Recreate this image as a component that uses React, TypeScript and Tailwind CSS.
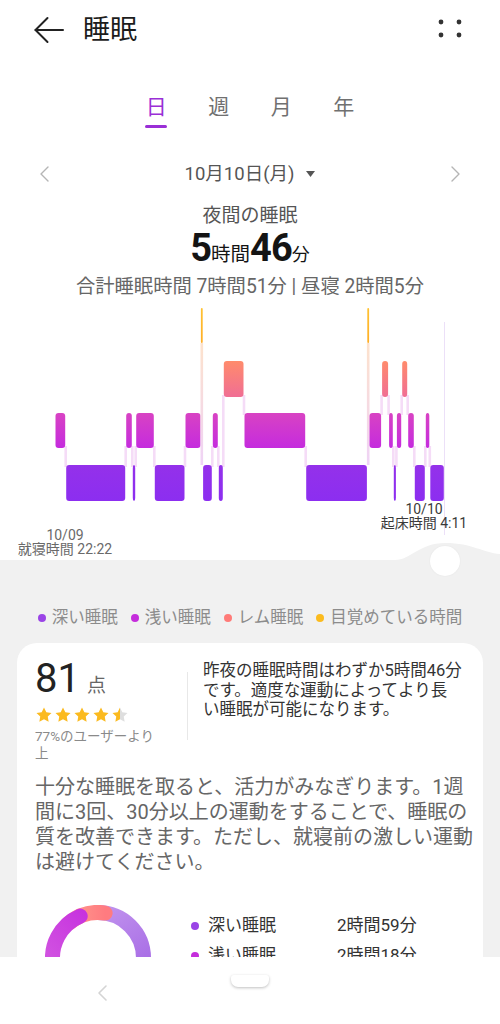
/* ── Sleep – daily view, stage chart, score card ────────── */

type Stage = 'awake' | 'rem' | 'light' | 'deep';

// y ranges of every stage row inside the chart box
const LEVEL: Record<Stage, [number, number]> = {
  awake: [8, 43],
  rem: [61, 97],
  light: [113, 148],
  deep: [165, 201],
};

const SEGS: [Stage, number, number][] = [
  ['light', 55, 65.7],
  ['deep', 65.7, 125.7],
  ['light', 125.7, 132.3],
  ['deep', 132.3, 135.7],
  ['light', 135.7, 154.3],
  ['deep', 154.3, 185],
  ['light', 185, 201],
  ['awake', 201, 202.6],
  ['deep', 202.6, 212.3],
  ['light', 212.3, 218.3],
  ['deep', 218.3, 223.3],
  ['rem', 223.3, 244],
  ['light', 244, 305.7],
  ['deep', 305.7, 367.4],
  ['awake', 367.4, 369],
  ['light', 369, 381.6],
  ['rem', 381.6, 388.6],
  ['light', 388.6, 393.3],
  ['deep', 393.3, 396.4],
  ['light', 396.4, 401.7],
  ['rem', 401.7, 407.7],
  ['light', 407.7, 414.3],
  ['deep', 414.3, 425.3],
  ['light', 425.3, 429.8],
  ['deep', 429.8, 444.3],
];

function SleepChart() {
  const links: { x: number; y0: number; y1: number }[] = [];
  for (let i = 1; i < SEGS.length; i++) {
    const a = SEGS[i - 1][0];
    const b = SEGS[i][0];
    if (a === 'awake' || b === 'awake') continue;
    const upper = LEVEL[a][0] < LEVEL[b][0] ? a : b;
    const lower = upper === a ? b : a;
    links.push({ x: SEGS[i][1], y0: LEVEL[upper][1] - 2, y1: LEVEL[lower][0] + 2 });
  }

  return (
    <div className="relative h-[260px]">
      <svg width="500" height="260" viewBox="0 0 500 260" className="block">
        <defs>
          <linearGradient id="stageGrad" gradientUnits="userSpaceOnUse" x1="0" y1="8" x2="0" y2="201">
            <stop offset="0" stopColor="#ffc233" />
            <stop offset="0.181" stopColor="#ffae25" />
            <stop offset="0.275" stopColor="#ff8b6c" />
            <stop offset="0.461" stopColor="#f06e94" />
            <stop offset="0.544" stopColor="#d843c3" />
            <stop offset="0.725" stopColor="#c52bde" />
            <stop offset="0.813" stopColor="#9431ea" />
            <stop offset="1" stopColor="#8c2ef0" />
          </linearGradient>
          <linearGradient id="awakeFade" x1="0" y1="0" x2="0" y2="1">
            <stop offset="0" stopColor="#fde2cc" />
            <stop offset="1" stopColor="#efd3f6" />
          </linearGradient>
        </defs>

        <line x1="444.5" y1="22" x2="444.5" y2="235" stroke="#ece0f8" strokeWidth="1" />

        {links.map((l, i) => (
          <rect key={`l${i}`} x={l.x - 1.3} y={l.y0} width="2.6" height={l.y1 - l.y0} fill="#f5dcf7" />
        ))}

        {SEGS.map(([s, x0, x1], i) => {
          if (s === 'awake') {
            const cx = (x0 + x1) / 2;
            const down = Math.max(LEVEL[SEGS[i - 1][0]][0], LEVEL[SEGS[i + 1][0]][0]);
            return (
              <g key={i}>
                <rect x={cx - 1.3} y={43} width="2.6" height={down - 43} fill="url(#awakeFade)" />
                <rect x={cx - 0.9} y={8} width="1.8" height={35} rx="0.9" fill="url(#stageGrad)" />
              </g>
            );
          }
          const [t, b] = LEVEL[s];
          return (
            <rect
              key={i}
              x={x0 + 0.5}
              y={t}
              width={Math.max(1, x1 - x0 - 1)}
              height={b - t}
              rx="3"
              fill="url(#stageGrad)"
            />
          );
        })}
      </svg>

      <div className="absolute left-[15px] top-[228px] w-[100px] flex flex-col items-center text-[14px] leading-[14px] text-[#6a6a6a] whitespace-nowrap">
        <span>10/09</span>
        <span>就寝時間 22:22</span>
      </div>
      <div className="absolute left-[374px] top-[202px] w-[100px] flex flex-col items-center text-[14px] leading-[14px] text-[#3a3a3a] whitespace-nowrap">
        <span>10/10</span>
        <span>起床時間 4:11</span>
      </div>
    </div>
  );
}

function Star({ half = false }: { half?: boolean }) {
  return (
    <svg width="18" height="18" viewBox="0 0 24 24">
      {half && (
        <defs>
          <linearGradient id="halfStar" x1="0" y1="0" x2="1" y2="0">
            <stop offset="0.5" stopColor="#fbba1f" />
            <stop offset="0.5" stopColor="#dedede" />
          </linearGradient>
        </defs>
      )}
      <polygon
        points="12,2 15.09,8.26 22,9.27 17,14.14 18.18,21.02 12,17.77 5.82,21.02 7,14.14 2,9.27 8.91,8.26"
        fill={half ? 'url(#halfStar)' : '#fbba1f'}
      />
    </svg>
  );
}

function arc(cx: number, cy: number, r: number, a0: number, a1: number) {
  const p = (a: number) => [cx + r * Math.sin((a * Math.PI) / 180), cy - r * Math.cos((a * Math.PI) / 180)];
  const [x0, y0] = p(a0);
  const [x1, y1] = p(a1);
  const large = a1 - a0 > 180 ? 1 : 0;
  return `M${x0} ${y0} A${r} ${r} 0 ${large} 1 ${x1} ${y1}`;
}

function Donut() {
  return (
    <svg width="106" height="106" viewBox="0 0 106 106" className="shrink-0">
      <defs>
        <linearGradient id="deepArc" gradientUnits="userSpaceOnUse" x1="53" y1="0" x2="106" y2="80">
          <stop offset="0" stopColor="#c295ee" />
          <stop offset="1" stopColor="#a162e3" />
        </linearGradient>
        <linearGradient id="lightArc" gradientUnits="userSpaceOnUse" x1="60" y1="5" x2="0" y2="60">
          <stop offset="0" stopColor="#c42ade" />
          <stop offset="1" stopColor="#d256e1" />
        </linearGradient>
        <linearGradient id="remArc" x1="0" y1="0" x2="1" y2="0">
          <stop offset="0" stopColor="#ff9a8e" />
          <stop offset="1" stopColor="#ff7b80" />
        </linearGradient>
      </defs>
      <path d={arc(53, 53, 45.5, 0, 180)} stroke="url(#deepArc)" strokeWidth="15" fill="none" />
      <path d={arc(53, 53, 45.5, -40, 9)} stroke="url(#remArc)" strokeWidth="15" fill="none" strokeLinecap="round" />
      <path d={arc(53, 53, 45.5, 180, 337)} stroke="url(#lightArc)" strokeWidth="15" fill="none" strokeLinecap="round" />
    </svg>
  );
}

const legend = [
  { label: '深い睡眠', color: 'bg-[#9a44e6]' },
  { label: '浅い睡眠', color: 'bg-[#c52ddc]' },
  { label: 'レム睡眠', color: 'bg-[#ff7b78]' },
  { label: '目覚めている時間', color: 'bg-[#fbbb1e]' },
];

const tabs = ['日', '週', '月', '年'];

export default function App() {
  return (
    <div className="relative h-[1024px] w-[500px] overflow-hidden bg-white font-['Roboto','Noto_Sans_CJK_JP',sans-serif]">
      {/* Header */}
      <div className="h-[60px] flex items-center pl-[33px] pr-[38px]">
        <svg width="32" height="28" viewBox="0 0 32 28" fill="none" stroke="#222" strokeWidth="2" strokeLinecap="round" strokeLinejoin="round">
          <line x1="2.5" y1="14" x2="30" y2="14" />
          <polyline points="14.5,2 2.5,14 14.5,26" />
        </svg>
        <h1 className="ml-[18px] text-[27px] leading-none text-[#1c1c1c]">睡眠</h1>
        <svg width="24" height="19" viewBox="0 0 24 19" className="ml-auto -mt-[3px]">
          <circle cx="3" cy="3" r="2.4" fill="#333" />
          <circle cx="21" cy="3" r="2.4" fill="#333" />
          <circle cx="3" cy="16" r="2.4" fill="#333" />
          <circle cx="21" cy="16" r="2.4" fill="#333" />
        </svg>
      </div>

      {/* Tabs */}
      <div className="mt-[33px] flex justify-center gap-[22.5px]">
        {tabs.map((t, i) => (
          <div key={t} className="w-[40px] flex flex-col items-center">
            <span className={`text-[21px] leading-[28px] ${i === 0 ? 'text-[#9a2fd6]' : 'text-[#707070]'}`}>{t}</span>
            <span className={`mt-[4px] h-[3px] w-[22px] rounded-full ${i === 0 ? 'bg-[#9a2fd6]' : 'bg-transparent'}`} />
          </div>
        ))}
      </div>

      {/* Date row */}
      <div className="mt-[32px] h-[28px] flex items-center justify-between px-[40px]">
        <svg width="9" height="16" viewBox="0 0 9 16" fill="none" stroke="#b5b5b5" strokeWidth="1.4" strokeLinecap="round" strokeLinejoin="round">
          <polyline points="8,1 1,8 8,15" />
        </svg>
        <div className="flex items-center">
          <span className="text-[18.5px] leading-none text-[#555]">10月10日(月)</span>
          <svg width="9" height="6" viewBox="0 0 9 6" className="ml-[12px]">
            <polygon points="0,0 9,0 4.5,6" fill="#555" />
          </svg>
        </div>
        <svg width="9" height="16" viewBox="0 0 9 16" fill="none" stroke="#b5b5b5" strokeWidth="1.4" strokeLinecap="round" strokeLinejoin="round">
          <polyline points="1,1 8,8 1,15" />
        </svg>
      </div>

      <div className="mt-[15px] h-[26px] text-center text-[19px] leading-[26px] text-[#555]">夜間の睡眠</div>

      <div className="h-[40px] flex justify-center items-baseline text-[#141414] leading-[40px]">
        <span className="text-[38px] font-bold leading-none tracking-tight">5</span>
        <span className="text-[19.5px] leading-none">時間</span>
        <span className="text-[38px] font-bold leading-none tracking-tight">46</span>
        <span className="text-[18px] leading-none">分</span>
      </div>

      <div className="mt-[5.5px] h-[24px] text-center text-[19.3px] leading-[24px] text-[#666] whitespace-nowrap">
        合計睡眠時間 7時間51分 | 昼寝 2時間5分
      </div>

      <div className="mt-[1.5px]">
        <SleepChart />
      </div>

      {/* Gray section */}
      <div className="relative h-[464px] bg-[#f1f1f1]">
        <svg width="105" height="20" viewBox="0 0 105 20" className="absolute left-[395px] top-[-20px]">
          <path d="M0 20 C 16 20, 24 3, 50 3 C 78 3, 88 13, 105 14 L 105 20 Z" fill="#f1f1f1" />
        </svg>
        <div className="absolute left-[430px] top-[-14px] w-[30px] h-[30px] rounded-full bg-white shadow-[0_0_2px_rgba(0,0,0,0.06)]" />

        <div className="pt-[46px] h-[70px] flex justify-center items-end gap-[13px]">
          {legend.map((l) => (
            <div key={l.label} className="h-[24px] flex items-center">
              <span className={`w-[8px] h-[8px] rounded-full ${l.color}`} />
              <span className="ml-[6px] text-[16.5px] leading-[24px] text-[#8c8c8c] whitespace-nowrap">{l.label}</span>
            </div>
          ))}
        </div>

        {/* Score card */}
        <div className="mx-[17px] mt-[13px] rounded-[20px] bg-white pt-[16px] px-[18px] pb-[30px]">
          <div className="flex">
            <div className="w-[152px] shrink-0">
              <div className="flex items-baseline">
                <span className="text-[40px] leading-[40px] text-[#222]">81</span>
                <span className="ml-[7px] text-[19px] leading-none text-[#666]">点</span>
              </div>
              <div className="mt-[6.5px] flex gap-[1px]">
                <Star />
                <Star />
                <Star />
                <Star />
                <Star half />
              </div>
              <div className="mt-[4px] text-[13.5px] leading-[17px] text-[#8a8a8a] whitespace-nowrap">
                77%のユーザーより
                <br />上
              </div>
            </div>
            <div className="mt-[13px] w-px h-[68px] bg-[#e8e8e8] shrink-0" />
            <div className="ml-[15px] mt-[2px] text-[16.5px] leading-[19.5px] text-[#333] whitespace-nowrap">
              昨夜の睡眠時間はわずか5時間46分
              <br />
              です。適度な運動によってより長
              <br />
              い睡眠が可能になります。
            </div>
          </div>

          <p className="mt-[13.5px] text-[20px] leading-[25px] text-[#666] whitespace-nowrap">
            十分な睡眠を取ると、活力がみなぎります。1週
            <br />
            間に3回、30分以上の運動をすることで、睡眠の
            <br />
            質を改善できます。ただし、就寝前の激しい運動
            <br />
            は避けてください。
          </p>

          <div className="mt-[30px] flex">
            <div className="ml-[10px]">
              <Donut />
            </div>
            <div className="ml-[40px] mt-[6px] flex flex-col">
              <div className="h-[30px] flex items-center">
                <span className="w-[8px] h-[8px] rounded-full bg-[#9a44e6]" />
                <span className="ml-[9px] w-[129px] text-[17px] text-[#333]">深い睡眠</span>
                <span className="text-[17px] text-[#333]">2時間59分</span>
              </div>
              <div className="h-[30px] flex items-center">
                <span className="w-[8px] h-[8px] rounded-full bg-[#c52ddc]" />
                <span className="ml-[9px] w-[129px] text-[17px] text-[#333]">浅い睡眠</span>
                <span className="text-[17px] text-[#333]">2時間18分</span>
              </div>
            </div>
          </div>
        </div>
      </div>

      {/* System nav bar */}
      <div className="absolute bottom-0 left-0 right-0 h-[67px] bg-white">
        <svg width="12" height="18" viewBox="0 0 12 18" className="absolute left-[97px] top-[27px]" fill="none" stroke="#d4d4d4" strokeWidth="1.6" strokeLinecap="round" strokeLinejoin="round">
          <polyline points="9,2 2,9 9,16" />
        </svg>
        <div className="absolute left-[231px] top-[18px] w-[38px] h-[12px] rounded-b-[7px] rounded-t-[3px] bg-white shadow-[0_1px_3px_rgba(0,0,0,0.25)]" />
      </div>
    </div>
  );
}
